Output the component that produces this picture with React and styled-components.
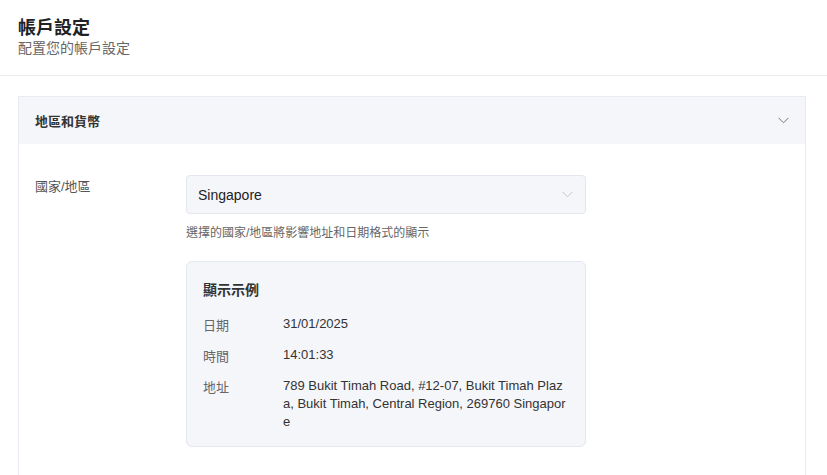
import React from 'react';
import styled, { createGlobalStyle } from 'styled-components';

const GlobalStyle = createGlobalStyle`
  html, body {
    margin: 0;
    padding: 0;
    background: #ffffff;
  }
  body {
    font-family: "Liberation Sans", "Noto Sans CJK TC", sans-serif;
    color: #333;
  }
`;

const Page = styled.div`
  height: 100vh;
  overflow-y: auto;
  background: #fff;
  &::-webkit-scrollbar {
    width: 3px;
  }
  &::-webkit-scrollbar-track {
    background: #f6f6f8;
  }
  &::-webkit-scrollbar-thumb {
    background: #d9d9dc;
  }
`;

const Header = styled.header`
  padding: 17px 18px 18px;
  border-bottom: 1px solid #ebebf0;
`;

const Title = styled.h1`
  margin: 0;
  font-size: 18px;
  line-height: 22px;
  font-weight: 700;
  color: #222;
`;

const Subtitle = styled.p`
  margin: 0;
  font-size: 14px;
  line-height: 18px;
  color: #666;
`;

const Main = styled.main`
  padding: 20px 21px 20px 18px;
`;

const Card = styled.section`
  border: 1px solid #e8ebf2;
  background: #fff;
`;

const CardHead = styled.div`
  display: flex;
  align-items: center;
  justify-content: space-between;
  height: 47px;
  padding: 0 16px;
  background: #f5f6fa;
  font-size: 13px;
  font-weight: 700;
  color: #333;
`;

const CardBody = styled.div`
  padding: 31px 16px 120px;
`;

const FormRow = styled.div`
  display: grid;
  grid-template-columns: 151px 400px;
  align-items: start;
`;

const Label = styled.div`
  font-size: 13px;
  line-height: 20px;
  padding-top: 2px;
  color: #555;
`;

const Field = styled.div`
  display: flex;
  flex-direction: column;
`;

const Select = styled.div`
  display: flex;
  align-items: center;
  justify-content: space-between;
  box-sizing: border-box;
  height: 39px;
  padding: 0 12px 0 11px;
  background: #f5f6fa;
  border: 1px solid #e4e6ee;
  border-radius: 4px;
  font-size: 14px;
  color: #222;
`;

const Help = styled.div`
  margin-top: 10px;
  font-size: 12px;
  line-height: 18px;
  color: #666;
`;

const Example = styled.div`
  margin-top: 19px;
  box-sizing: border-box;
  padding: 18px 16px 15px;
  background: #f5f6fa;
  border: 1px solid #e4e7ef;
  border-radius: 6px;
`;

const ExampleTitle = styled.div`
  font-size: 14px;
  line-height: 20px;
  font-weight: 700;
  color: #333;
  margin-bottom: 15px;
`;

const ExampleList = styled.div`
  display: flex;
  flex-direction: column;
  gap: 11px;
`;

const ExampleRow = styled.div`
  display: grid;
  grid-template-columns: 80px 1fr;
  font-size: 13px;
  line-height: 18px;
`;

const ExampleLabel = styled.div`
  color: #666;
  padding-top: 2px;
`;

const ExampleValue = styled.div`
  color: #333;
  word-break: break-all;
`;

const Chevron = ({ color }) => (
  <svg width="11" height="7" viewBox="0 0 11 7" fill="none">
    <path d="M0.5 0.8 L5.5 5.8 L10.5 0.8" stroke={color} strokeWidth="1" />
  </svg>
);

const App = () => {
  const examples = [
    { label: '日期', value: '31/01/2025' },
    { label: '時間', value: '14:01:33' },
    { label: '地址', value: '789 Bukit Timah Road, #12-07, Bukit Timah Plaza, Bukit Timah, Central Region, 269760 Singapore' },
  ];

  return (
    <Page>
      <GlobalStyle />
      <Header>
        <Title>帳戶設定</Title>
        <Subtitle>配置您的帳戶設定</Subtitle>
      </Header>
      <Main>
        <Card>
          <CardHead>
            <span>地區和貨幣</span>
            <Chevron color="#777" />
          </CardHead>
          <CardBody>
            <FormRow>
              <Label>國家/地區</Label>
              <Field>
                <Select>
                  <span>Singapore</span>
                  <Chevron color="#c4c6cc" />
                </Select>
                <Help>選擇的國家/地區將影響地址和日期格式的顯示</Help>
                <Example>
                  <ExampleTitle>顯示示例</ExampleTitle>
                  <ExampleList>
                    {examples.map((e) => (
                      <ExampleRow key={e.label}>
                        <ExampleLabel>{e.label}</ExampleLabel>
                        <ExampleValue>{e.value}</ExampleValue>
                      </ExampleRow>
                    ))}
                  </ExampleList>
                </Example>
              </Field>
            </FormRow>
          </CardBody>
        </Card>
      </Main>
    </Page>
  );
};

export default App;
